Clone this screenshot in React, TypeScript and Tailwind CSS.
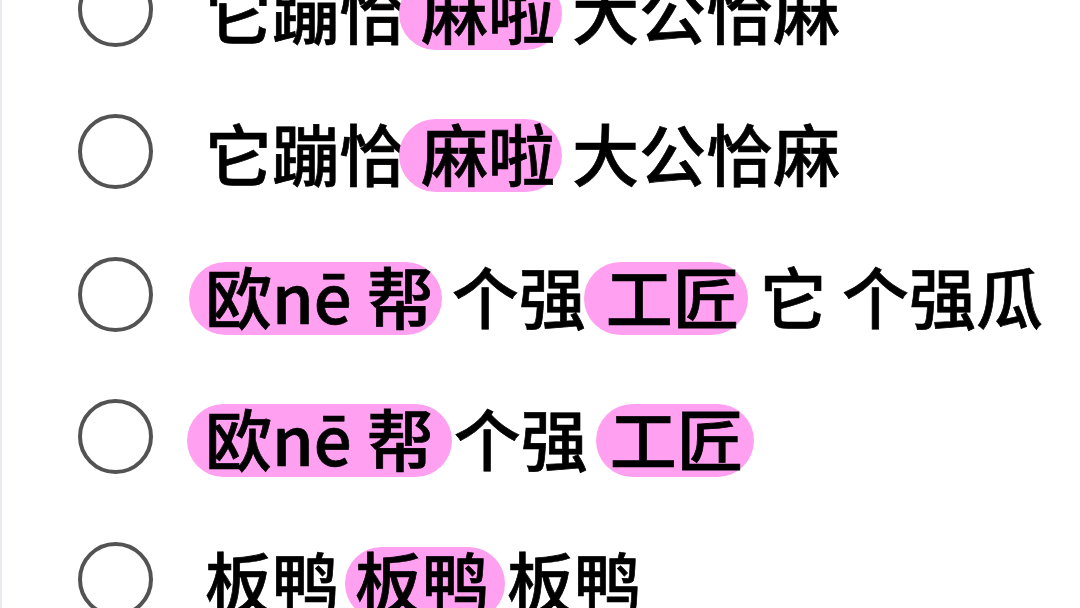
type Seg = { t: string; hl?: boolean; cls?: string };

// one line per radio option; pink segments are the highlighted words
const rows: Seg[][] = [
  [
    { t: '它蹦恰' },
    { t: '麻啦', hl: true, cls: 'ml-[-7px] pl-[22px] pr-[7px]' },
    { t: '大公恰麻', cls: 'ml-[10px]' },
  ],
  [
    { t: '它蹦恰' },
    { t: '麻啦', hl: true, cls: 'ml-[-7px] pl-[22px] pr-[7px]' },
    { t: '大公恰麻', cls: 'ml-[10px]' },
  ],
  [
    { t: '欧nē 帮', hl: true, cls: 'ml-[-16px] pl-[16px] pr-[8px]' },
    { t: '个强', cls: 'ml-[10px]' },
    { t: '工匠', hl: true, cls: 'ml-[-2px] pl-[22px] pr-[8px]' },
    { t: '它 个强瓜', cls: 'ml-[12px]' },
  ],
  [
    { t: '欧nē 帮', hl: true, cls: 'ml-[-18px] pl-[18px] pr-[18px]' },
    { t: '个强', cls: 'ml-[2px]' },
    { t: '工匠', hl: true, cls: 'ml-[8px] pl-[14px] pr-[10px]' },
  ],
  [
    { t: '板鸭' },
    { t: '板鸭', hl: true, cls: 'ml-[6px] pl-[10px] pr-[16px]' },
    { t: '板鸭', cls: 'ml-[2px]' },
  ],
];

function Radio() {
  return <div className="w-[75px] h-[75px] shrink-0 rounded-full border-[4px] border-[#535353]" />;
}

export default function App() {
  return (
    <div className="w-[1080px] h-[608px] overflow-hidden bg-white border-l-[2px] border-[#e9e9ee]">
      <div
        className="mt-[-62px] text-black font-medium text-[67px] leading-none [-webkit-text-stroke:0.7px_#000]"
        style={{ fontFamily: '"Noto Sans CJK SC", "Noto Sans", sans-serif' }}
      >
        {rows.map((segs, i) => (
          <div key={i} className="flex items-center h-[142.5px] pl-[76px]">
            <Radio />
            <div className="flex items-center ml-[52px] whitespace-pre">
              {segs.map((s, j) =>
                s.hl ? (
                  <span
                    key={j}
                    className={`inline-flex items-center h-[73px] mt-[8px] rounded-full bg-[#ffa0f1] ${s.cls ?? ''}`}
                  >
                    <span className="mt-[-8px]">{s.t}</span>
                  </span>
                ) : (
                  <span key={j} className={s.cls}>
                    {s.t}
                  </span>
                )
              )}
            </div>
          </div>
        ))}
      </div>
    </div>
  );
}
